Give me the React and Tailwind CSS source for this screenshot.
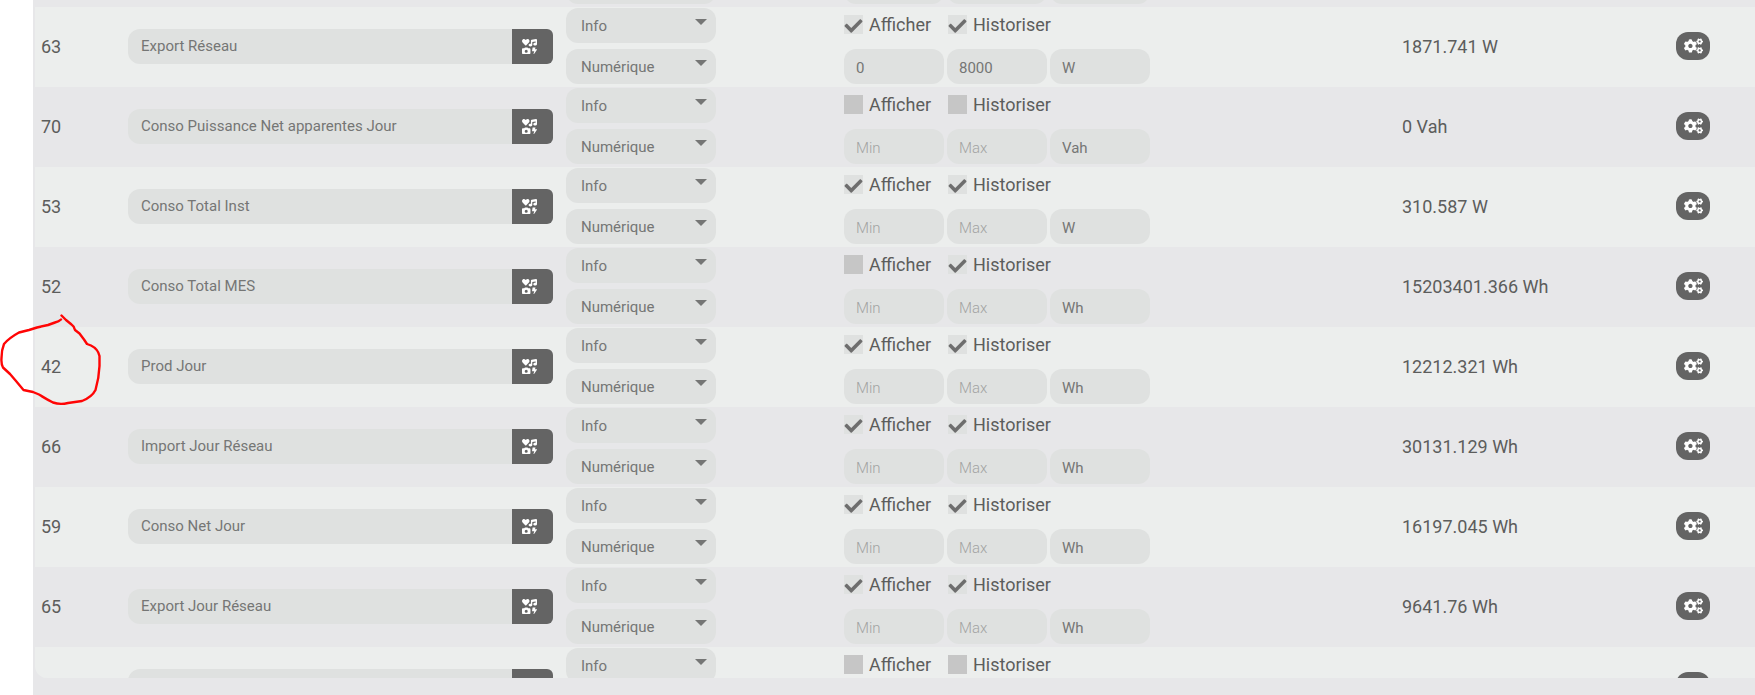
import { useState } from 'react';
import { FaCheck, FaCogs, FaIcons } from 'react-icons/fa';

const COMMANDS = [
  { id: 62, name: 'Import Réseau', visible: true, history: true, min: '', max: '', unit: 'W', state: '0 W' },
  { id: 63, name: 'Export Réseau', visible: true, history: true, min: '0', max: '8000', unit: 'W', state: '1871.741 W' },
  { id: 70, name: 'Conso Puissance Net apparentes Jour', visible: false, history: false, min: '', max: '', unit: 'Vah', state: '0 Vah' },
  { id: 53, name: 'Conso Total Inst', visible: true, history: true, min: '', max: '', unit: 'W', state: '310.587 W' },
  { id: 52, name: 'Conso Total MES', visible: false, history: true, min: '', max: '', unit: 'Wh', state: '15203401.366 Wh' },
  { id: 42, name: 'Prod Jour', visible: true, history: true, min: '', max: '', unit: 'Wh', state: '12212.321 Wh' },
  { id: 66, name: 'Import Jour Réseau', visible: true, history: true, min: '', max: '', unit: 'Wh', state: '30131.129 Wh' },
  { id: 59, name: 'Conso Net Jour', visible: true, history: true, min: '', max: '', unit: 'Wh', state: '16197.045 Wh' },
  { id: 65, name: 'Export Jour Réseau', visible: true, history: true, min: '', max: '', unit: 'Wh', state: '9641.76 Wh' },
  { id: 71, name: '', visible: false, history: false, min: '', max: '', unit: '', state: '' },
];

function SelectField({ label, options }) {
  return (
    <div className="relative w-[150px]">
      <select
        aria-label={label}
        className="block w-full h-[35px] pl-[15px] pr-6 pt-[2px] appearance-none rounded-[12px] bg-[#dfe1e0] text-[15px] text-[#757675] outline-none"
      >
        {options.map((option) => (
          <option key={option}>{option}</option>
        ))}
      </select>
      <svg className="absolute right-[9px] top-[11px] w-3 h-[6px] pointer-events-none" viewBox="0 0 12 6">
        <path d="M0 0h12L6 6z" fill="#757675" />
      </svg>
    </div>
  );
}

function CheckField({ label, defaultChecked }) {
  const [checked, setChecked] = useState(defaultChecked);

  return (
    <label className="flex items-center gap-[6px] w-[104px] h-[19px] text-[18px] leading-[19px]">
      <span className="relative w-[19px] h-[19px] shrink-0">
        <input
          type="checkbox"
          checked={checked}
          onChange={(e) => setChecked(e.target.checked)}
          className="block w-[19px] h-[19px] appearance-none bg-[#c6c6c6] checked:bg-[#dfe1e0]"
        />
        {checked && <FaCheck className="absolute left-0 top-[2px] w-[19px] h-[18px] text-[#6e6e6e] pointer-events-none" />}
      </span>
      {label}
    </label>
  );
}

function SmallInput({ label, value }) {
  return (
    <input
      type="text"
      aria-label={label}
      placeholder={label}
      defaultValue={value}
      className="w-[100px] h-[35px] px-[12px] pt-[2px] rounded-[12px] bg-[#dfe1e0] text-[15px] text-[#757675] placeholder:font-light placeholder:text-[#a2a3a2] outline-none"
    />
  );
}

function CommandRow({ cmd }) {
  return (
    <tr className="h-20 odd:bg-[#e7e7e9] even:bg-[#eceeed]">
      <td className="px-[6px] pb-[2px] text-[18px]">{cmd.id}</td>
      <td className="pl-[6px] pr-[7px] pb-[2px]">
        <div className="flex h-[35px]">
          <input
            type="text"
            aria-label="Nom"
            defaultValue={cmd.name}
            className="flex-1 min-w-0 px-[13px] rounded-l-[12px] bg-[#dfe1e0] text-[15px] text-[#757675] outline-none"
          />
          <button type="button" title="Choisir une icône" className="w-[41px] pl-[10px] rounded-r-[6px] bg-[#646464] text-white">
            <FaIcons className="w-[15px] h-[15px]" />
          </button>
        </div>
      </td>
      <td className="px-[6px] pt-px pb-[3px]">
        <div className="flex flex-col gap-[6px]">
          <SelectField label="Type" options={['Info', 'Action']} />
          <SelectField label="Sous-type" options={['Numérique', 'Binaire', 'Autre']} />
        </div>
      </td>
      <td className="px-[6px] pt-2 pb-[3px]">
        <div className="flex">
          <CheckField label="Afficher" defaultChecked={cmd.visible} />
          <CheckField label="Historiser" defaultChecked={cmd.history} />
        </div>
        <div className="flex gap-[3px] mt-[15px]">
          <SmallInput label="Min" value={cmd.min} />
          <SmallInput label="Max" value={cmd.max} />
          <SmallInput label="Unité" value={cmd.unit} />
        </div>
      </td>
      <td className="px-[6px] pb-[2px] text-[18px]">{cmd.state}</td>
      <td className="px-[6px] pb-[2px]">
        <button type="button" title="Configuration" className="flex items-center justify-center w-[34px] h-7 rounded-[12px] bg-[#646464] text-white">
          <FaCogs className="w-[19px] h-4" />
        </button>
      </td>
    </tr>
  );
}

export default function App() {
  return (
    <div className="relative h-screen overflow-hidden bg-white pl-[33px] font-['Roboto',sans-serif] text-[#5c5d5c]">
      <div className="h-full bg-[#e7e7e9] pl-[2px] pb-[17px]">
        <div className="h-full overflow-hidden rounded-bl-[12px]">
          {/* list scrolled just past its first row */}
          <table className="-mt-[73px] w-full table-fixed border-collapse">
            <colgroup>
              <col className="w-[87px]" />
              <col className="w-[438px]" />
              <col className="w-[278px]" />
              <col className="w-[558px]" />
              <col className="w-[274px]" />
              <col />
            </colgroup>
            <tbody>
              {COMMANDS.map((cmd) => (
                <CommandRow key={cmd.id} cmd={cmd} />
              ))}
            </tbody>
          </table>
        </div>
      </div>

      {/* hand-drawn marker around id 42 */}
      <svg className="absolute left-0 top-[310px] w-[105px] h-[100px] pointer-events-none" viewBox="0 310 105 100" fill="none">
        <path
          d="M61 319.500Q59 321.500 55 322.500L48 325L37 327.500L29 330L19 332.500Q9 338 4 344Q1.500 350 1.500 358Q1 364 3 367.500L10 374L16 381L23.500 390L33 392L39 394.500Q46 399 53 402.500Q60 405 68 403L82 401Q92 397 95.500 390Q99 378 99.500 366L99.500 356Q98 349 91 345.500L87 344L84 339.500L79.500 333.500L75 330Q74 326 71.500 324.500L66 320L61.500 315.500"
          stroke="#ff0505"
          strokeWidth="2.400"
          strokeLinecap="round"
          strokeLinejoin="round"
        />
      </svg>
    </div>
  );
}
